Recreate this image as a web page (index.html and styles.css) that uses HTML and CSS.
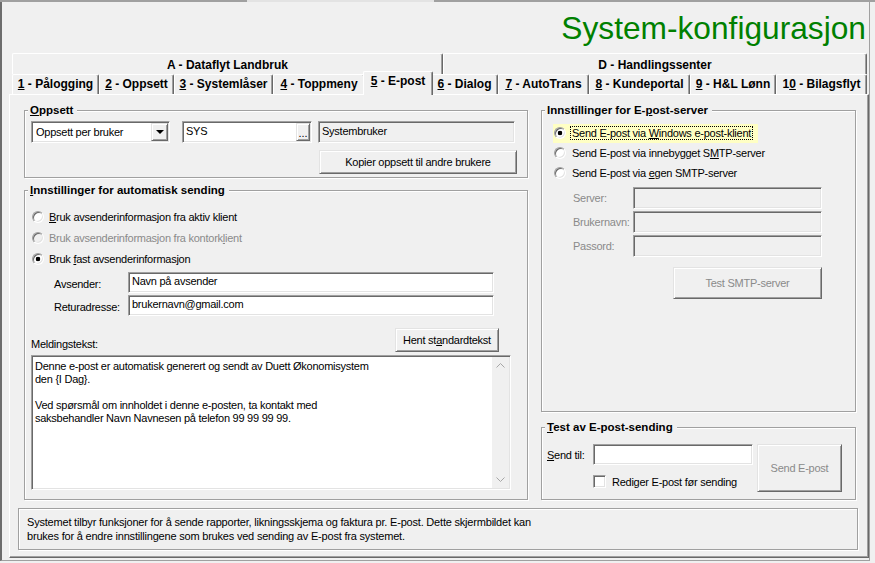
FILE: index.html
```html
<!DOCTYPE html>
<html>
  <head>
    <title>System-konfigurasjon</title>
    <link rel="stylesheet" href="styles.css">
  </head>
  <body>
    <div class="topline"></div>
    <div class="window">
      <div class="header">
        <h1 class="title">System-konfigurasjon</h1>
      </div>

      <div class="tabs">
        <div class="tabrow back">
          <div class="tab tab-a">A - Dataflyt Landbruk</div>
          <div class="tab tab-d">D - Handlingssenter</div>
        </div>
        <div class="tabrow front">
          <div class="tab t1"><u>1</u> - Pålogging</div>
          <div class="tab t2"><u>2</u> - Oppsett</div>
          <div class="tab t3"><u>3</u> - Systemlåser</div>
          <div class="tab t4"><u>4</u> - Toppmeny</div>
          <div class="tab t5 selected"><u>5</u> - E-post</div>
          <div class="tab t6"><u>6</u> - Dialog</div>
          <div class="tab t7"><u>7</u> - AutoTrans</div>
          <div class="tab t8"><u>8</u> - Kundeportal</div>
          <div class="tab t9"><u>9</u> - H&amp;L Lønn</div>
          <div class="tab t10">1<u>0</u> - Bilagsflyt</div>
        </div>
      </div>

      <div class="page">
        <div class="columns">
          <div class="col">
            <fieldset class="group group-oppsett">
              <legend><u>O</u>ppsett</legend>
              <div class="oppsett-row">
                <div class="combo">
                  <span class="combo-text">Oppsett per bruker</span>
                  <span class="combo-btn"><span class="arrow-down"></span></span>
                </div>
                <div class="field field-sys">
                  <span class="field-text">SYS</span>
                  <span class="dots-btn">...</span>
                </div>
                <div class="field field-readonly">Systembruker</div>
              </div>
              <div class="btn btn-copy">Kopier oppsett til andre brukere</div>
            </fieldset>

            <fieldset class="group group-auto">
              <legend><u>I</u>nnstillinger for automatisk sending</legend>
              <div class="radio-list">
                <div class="radio-row"><span class="radio"></span><span class="radio-text"><u>B</u>ruk avsenderinformasjon fra aktiv klient</span></div>
                <div class="radio-row disabled"><span class="radio"></span><span class="radio-text">Bruk avsenderinformasjon fra kontork<u>l</u>ient</span></div>
                <div class="radio-row"><span class="radio checked"></span><span class="radio-text">Bruk <u>f</u>ast avsenderinformasjon</span></div>
              </div>
              <div class="form-row first">
                <span class="form-label">Avsender:</span>
                <div class="field input-wide">Navn på avsender</div>
              </div>
              <div class="form-row">
                <span class="form-label">Returadresse:</span>
                <div class="field input-wide">brukernavn@gmail.com</div>
              </div>
              <div class="msg-head">
                <span class="msg-label">Meldingstekst:</span>
                <div class="btn btn-std">Hent st<u>a</u>ndardtekst</div>
              </div>
              <div class="field memo">
                <div class="memo-text">
                  Denne e-post er automatisk generert og sendt av Duett Økonomisystem<br>
                  den {I Dag}.<br>
                  <br>
                  Ved spørsmål om innholdet i denne e-posten, ta kontakt med<br>
                  saksbehandler Navn Navnesen på telefon 99 99 99 99.
                </div>
                <div class="scrollbar">
                  <span class="sb-arrow">
                    <svg width="9" height="5" viewBox="0 0 9 5"><polyline points="0.5,4.5 4.5,0.5 8.5,4.5" fill="none" stroke="#a6a6a6" stroke-width="1"/></svg>
                  </span>
                  <span class="sb-arrow">
                    <svg width="9" height="5" viewBox="0 0 9 5"><polyline points="0.5,0.5 4.5,4.5 8.5,0.5" fill="none" stroke="#a6a6a6" stroke-width="1"/></svg>
                  </span>
                </div>
              </div>
            </fieldset>
          </div>

          <div class="col col-right">
            <fieldset class="group group-server">
              <legend>Innstillinger for E-<u>p</u>ost-server</legend>
              <div class="radio-list server-radios">
                <div class="radio-row">
                  <span class="focus-wrap">
                    <span class="radio checked"></span><span class="focus">Send E-post via <u>W</u>indows e-post-klient</span>
                  </span>
                </div>
                <div class="radio-row"><span class="radio"></span><span class="radio-text">Send E-post via innebygget S<u>M</u>TP-server</span></div>
                <div class="radio-row"><span class="radio"></span><span class="radio-text">Send E-post via <u>e</u>gen SMTP-server</span></div>
              </div>
              <div class="smtp-list">
                <div class="smtp-row"><span class="smtp-label">Server:</span><div class="field field-disabled"></div></div>
                <div class="smtp-row"><span class="smtp-label">Brukernavn:</span><div class="field field-disabled"></div></div>
                <div class="smtp-row"><span class="smtp-label">Passord:</span><div class="field field-disabled"></div></div>
              </div>
              <div class="btn btn-test disabled">Test SMTP-server</div>
            </fieldset>

            <fieldset class="group group-test">
              <legend><u>T</u>est av E-post-sending</legend>
              <div class="test-body">
                <div class="test-left">
                  <div class="test-line">
                    <span class="test-label"><u>S</u>end til:</span>
                    <div class="field input-to"></div>
                  </div>
                  <div class="check-line">
                    <span class="checkbox"></span>
                    <span class="check-text">Rediger E-post før sending</span>
                  </div>
                </div>
                <div class="btn btn-send disabled">Send E-post</div>
              </div>
            </fieldset>
          </div>
        </div>

        <div class="info">
          Systemet tilbyr funksjoner for å sende rapporter, likningsskjema og faktura pr. E-post. Dette skjermbildet kan<br>
          brukes for å endre innstillingene som brukes ved sending av E-post fra systemet.
        </div>
      </div>
    </div>
  </body>
</html>
```

FILE: styles.css
```css
body {
  margin: 0;
  padding: 0;
  width: 875px;
  height: 563px;
  overflow: hidden;
  background: #f0f0f0;
  font-family: "Liberation Sans", Arial, sans-serif;
  font-size: 11px;
  letter-spacing: -0.25px;
  color: #000;
}

.topline {
  height: 2px;
  background: linear-gradient(to right, #a0a0a0 247px, #e3e3e3 247px, #e3e3e3 434px, #a0a0a0 434px);
}

.window {
  width: 870px;
  height: 559px;
  box-sizing: border-box;
  border-left: 2px solid #6d6d6d;
  border-right: 1px solid #a0a0a0;
  border-bottom: 1px solid #a0a0a0;
}

/* header */

.header {
  height: 51px;
  box-sizing: border-box;
  padding: 8px 3px 0 0;
  text-align: right;
}

.title {
  margin: 0;
  font-size: 31.7px;
  line-height: 36px;
  font-weight: normal;
  letter-spacing: 0;
  color: #008000;
}

/* tabs */

.tabs {
  margin-left: 10px;
  width: 855px;
}

.tabrow {
  display: flex;
  align-items: flex-start;
}

.tabrow.back {
  height: 21px;
}

.tabrow.front {
  height: 20px;
}

.tab {
  box-sizing: border-box;
  height: 100%;
  border-top: 1px solid #fff;
  border-left: 1px solid #fff;
  border-right: 1px solid #696969;
  box-shadow: inset -1px 0 #a0a0a0;
  border-radius: 2px 2px 0 0;
  background: #f0f0f0;
  font-weight: bold;
  font-size: 12px;
  letter-spacing: 0;
  line-height: 18px;
  text-align: center;
  white-space: nowrap;
}

.back .tab {
  height: 21px;
  padding-top: 2px;
}

.front .tab {
  height: 20px;
}

.tab-a { width: 431px; }
.tab-d { width: 424px; }

.t1 { width: 87px; }
.t2 { width: 75px; }
.t3 { width: 99px; }
.t4 { width: 92px; }
.t5 { width: 70px; }
.t6 { width: 67px; }
.t7 { width: 91px; }
.t8 { width: 101px; }
.t9 { width: 86px; }
.t10 { width: 91px; }

.front .tab.selected {
  position: relative;
  z-index: 1;
  height: 24px;
  margin: -3px -2px 0;
}

/* page */

.page {
  margin-left: 7px;
  width: 860px;
  height: 464px;
  box-sizing: border-box;
  border: 1px solid;
  border-color: #fff #696969 #696969 #fff;
  box-shadow: inset -1px -1px #a0a0a0;
  padding: 8px 0 0 14px;
}

.columns {
  display: grid;
  grid-template-columns: 504px 315px;
  column-gap: 13px;
}

.col-right {
  display: flex;
  flex-direction: column;
}

.group {
  margin: 0;
  padding: 0 0 0 3px;
  min-width: 0;
  border: 1px solid #a0a0a0;
  box-shadow: inset 1px 1px #fff, 1px 1px #fff;
}

.group legend {
  padding: 0 4px 0 2px;
  background: #f0f0f0;
  font-weight: bold;
  font-size: 11.5px;
  line-height: 14px;
  letter-spacing: 0;
}

/* common controls */

.field {
  box-sizing: border-box;
  height: 21px;
  padding: 1px 3px;
  line-height: 14px;
  background: #fff;
  border: 1px solid;
  border-color: #a0a0a0 #fff #fff #a0a0a0;
  box-shadow: inset 1px 1px #696969, inset -1px -1px #e3e3e3;
  white-space: nowrap;
}

.btn {
  box-sizing: border-box;
  display: flex;
  align-items: center;
  justify-content: center;
  background: #f0f0f0;
  border: 1px solid;
  border-color: #e3e3e3 #696969 #696969 #e3e3e3;
  box-shadow: inset 1px 1px #fff, inset -1px -1px #a0a0a0;
  white-space: nowrap;
}

.btn.disabled,
.disabled,
.smtp-label {
  color: #8a8a8a;
}

.radio {
  flex: none;
  width: 12px;
  height: 12px;
  box-sizing: border-box;
  border-radius: 50%;
  border: 1px solid;
  border-color: #a0a0a0 #fff #fff #a0a0a0;
  background: #fff;
  box-shadow: inset 1px 1px #696969, inset -1px -1px #e3e3e3;
}

.disabled .radio {
  background: #f0f0f0;
}

.radio.checked {
  background: radial-gradient(circle, #000 0, #000 2px, #fff 2.6px);
}

.checkbox {
  flex: none;
  width: 13px;
  height: 13px;
  box-sizing: border-box;
  background: #fff;
  border: 1px solid;
  border-color: #a0a0a0 #fff #fff #a0a0a0;
  box-shadow: inset 1px 1px #696969, inset -1px -1px #e3e3e3;
}

/* oppsett */

.group-oppsett {
  padding-bottom: 3px;
}

.oppsett-row {
  display: flex;
  margin-top: 4px;
}

.combo {
  display: flex;
  align-items: center;
  justify-content: space-between;
  box-sizing: border-box;
  width: 139px;
  height: 22px;
  margin-left: 3px;
  padding: 1px;
  background: #fff;
  border: 1px solid;
  border-color: #a0a0a0 #fff #fff #a0a0a0;
  box-shadow: inset 1px 1px #696969, inset -1px -1px #e3e3e3;
}

.combo-text {
  padding-left: 3px;
}

.combo-btn {
  display: flex;
  align-items: center;
  justify-content: center;
  box-sizing: border-box;
  width: 17px;
  height: 18px;
  background: #f0f0f0;
  border: 1px solid;
  border-color: #e3e3e3 #696969 #696969 #e3e3e3;
  box-shadow: inset 1px 1px #fff, inset -1px -1px #a0a0a0;
}

.arrow-down {
  width: 0;
  height: 0;
  border-left: 4px solid transparent;
  border-right: 4px solid transparent;
  border-top: 4px solid #000;
}

.field-sys {
  display: flex;
  justify-content: space-between;
  width: 130px;
  height: 22px;
  margin-left: 12px;
  padding: 1px 1px 1px 3px;
}

.field-text {
  padding-top: 1px;
}

.dots-btn {
  box-sizing: border-box;
  width: 14px;
  height: 18px;
  padding-top: 3px;
  text-align: center;
  line-height: 12px;
  letter-spacing: 0;
  background: #f0f0f0;
  border: 1px solid;
  border-color: #e3e3e3 #696969 #696969 #e3e3e3;
  box-shadow: inset 1px 1px #fff, inset -1px -1px #a0a0a0;
}

.field-readonly {
  width: 197px;
  height: 22px;
  margin-left: 6px;
  padding-top: 2px;
  background: #f0f0f0;
}

.btn-copy {
  width: 198px;
  height: 24px;
  margin: 7px 0 0 291px;
}

/* automatisk sending */

.group-auto {
  margin-top: 5px;
  padding-bottom: 9px;
}

.radio-list {
  margin-top: 9px;
}

.radio-row {
  display: flex;
  align-items: center;
  height: 21px;
  margin-left: 4px;
  white-space: nowrap;
}

.radio-text {
  margin-left: 5px;
}

.form-row {
  display: flex;
  align-items: center;
  margin-top: 2px;
}

.form-row.first {
  margin-top: 3px;
}

.form-label {
  width: 74px;
  margin-left: 26px;
  padding-top: 3px;
}

.input-wide {
  width: 366px;
}

.msg-head {
  display: flex;
  align-items: flex-end;
  justify-content: space-between;
  width: 471px;
  margin-top: 12px;
}

.msg-label {
  margin-left: 3px;
  line-height: 13px;
  padding-bottom: 1px;
}

.btn-std {
  width: 104px;
  height: 24px;
}

.memo {
  display: flex;
  width: 480px;
  height: 135px;
  margin: 3px 0 0 3px;
  padding: 1px;
  line-height: 13px;
}

.memo-text {
  flex: 1;
  padding: 3px 2px 0 2px;
}

.scrollbar {
  display: flex;
  flex-direction: column;
  justify-content: space-between;
  width: 17px;
  background: #f0f0f0;
}

.sb-arrow {
  display: flex;
  align-items: center;
  justify-content: center;
  height: 17px;
}

/* e-post-server */

.group-server {
  flex: 1;
  padding-bottom: 11px;
}

.server-radios {
  margin-top: 6px;
}

.server-radios .radio-row {
  height: 20px;
  margin-left: 9px;
}

.server-radios .radio-text {
  margin-left: 6px;
}

.server-radios .focus-wrap {
  display: flex;
  align-items: center;
  width: 205px;
  height: 19px;
  margin-left: -1px;
  padding-left: 1px;
  box-sizing: border-box;
  background: #ffffc4;
}

.focus {
  margin-left: 4px;
  padding: 0 1px;
  line-height: 12px;
  border: 1px dotted #000;
}

.smtp-list {
  display: flex;
  flex-direction: column;
  gap: 2px;
  margin-top: 4px;
}

.smtp-row {
  display: flex;
  align-items: center;
}

.smtp-label {
  width: 60px;
  margin-left: 28px;
}

.field-disabled {
  width: 189px;
  height: 22px;
  background: #f0f0f0;
}

.btn-test {
  width: 149px;
  height: 32px;
  margin: 10px 0 0 128px;
}

/* test */

.group-test {
  margin-top: 8px;
}

.test-body {
  display: flex;
  margin-top: 10px;
  padding-bottom: 7px;
}

.test-line {
  display: flex;
  align-items: center;
}

.test-label {
  width: 46px;
  margin-left: 2px;
}

.input-to {
  width: 160px;
}

.check-line {
  display: flex;
  align-items: center;
  margin: 10px 0 0 48px;
}

.check-text {
  margin-left: 6px;
}

.btn-send {
  width: 85px;
  height: 48px;
  margin-left: 4px;
}

/* info */

.info {
  box-sizing: border-box;
  width: 840px;
  height: 42px;
  margin: 8px 0 0 -6px;
  padding: 6px 8px 0;
  border: 1px solid #a0a0a0;
  box-shadow: inset 1px 1px #fff, 1px 1px #fff;
  font-size: 11px;
  letter-spacing: -0.2px;
  line-height: 14px;
}
```
